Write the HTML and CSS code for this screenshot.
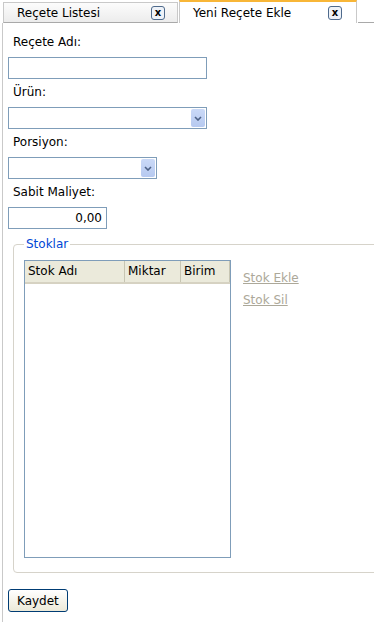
FILE: index.html
```html
<!DOCTYPE html>
<html lang="tr">
<head>
    <meta charset="UTF-8">
    <meta name="viewport" content="width=device-width, initial-scale=1.0">
    <title>Reçete</title>
    <link rel="stylesheet" href="styles.css">
</head>
<body>
    <div class="tabs">
        <div class="tab">
            <span class="tab-title">Reçete Listesi</span>
            <span class="tab-close">x</span>
        </div>
        <div class="tab active">
            <span class="tab-title">Yeni Reçete Ekle</span>
            <span class="tab-close">x</span>
        </div>
        <div class="tab-fill"></div>
    </div>

    <div class="panel">
        <form class="recipe-form">
            <label for="receteAdi">Reçete Adı:</label>
            <input type="text" id="receteAdi" class="field wide">

            <label for="urun">Ürün:</label>
            <div class="select-wrap wide">
                <select id="urun" class="field"></select>
                <span class="select-btn">
                    <svg width="8" height="5" viewBox="0 0 8 5"><path d="M1 1 L4 4 L7 1" fill="none" stroke="#4d6185" stroke-width="1.6"/></svg>
                </span>
            </div>

            <label for="porsiyon">Porsiyon:</label>
            <div class="select-wrap mid">
                <select id="porsiyon" class="field"></select>
                <span class="select-btn">
                    <svg width="8" height="5" viewBox="0 0 8 5"><path d="M1 1 L4 4 L7 1" fill="none" stroke="#4d6185" stroke-width="1.6"/></svg>
                </span>
            </div>

            <label for="maliyet">Sabit Maliyet:</label>
            <input type="text" id="maliyet" class="field short num" value="0,00">

            <fieldset class="stocks">
                <legend>Stoklar</legend>
                <div class="stock-body">
                    <div class="grid">
                        <div class="grid-head">
                            <div class="col col-name">Stok Adı</div>
                            <div class="col col-qty">Miktar</div>
                            <div class="col col-unit">Birim</div>
                        </div>
                    </div>
                    <div class="stock-links">
                        <a href="#">Stok Ekle</a>
                        <a href="#">Stok Sil</a>
                    </div>
                </div>
            </fieldset>

            <button type="button" class="save">Kaydet</button>
        </form>
    </div>
</body>
</html>
```

FILE: styles.css
```css
body {
    margin: 0;
    font-family: 'DejaVu Sans', sans-serif;
    font-size: 12px;
    color: #000;
    background: #fff;
}

.tabs {
    display: flex;
    height: 23px;
    padding-left: 3px;
}

.tab {
    width: 175px;
    height: 21px;
    margin-top: 2px;
    display: flex;
    align-items: center;
    justify-content: space-between;
    padding: 0 12px 0 13px;
    box-sizing: border-box;
    border: 1px solid #c9c9c9;
    border-bottom: 1px solid #a9a9a9;
    background: linear-gradient(#fcfcfc, #ececec);
    margin-right: 1px;
}

.tab.active {
    width: 178px;
    height: 23px;
    margin-top: 0;
    padding-right: 14px;
    border-top: 2px solid #f8b637;
    border-bottom: none;
    background: #fff;
}

.tab-fill {
    flex: 1;
    border-bottom: 1px solid #a9a9a9;
}

.tab-close {
    width: 12px;
    height: 12px;
    border: 1px solid #4e6a8c;
    border-radius: 3px;
    font-size: 10px;
    font-weight: bold;
    line-height: 11px;
    text-align: center;
    background: #eef2f8;
}

.panel {
    margin-left: 2px;
    border-left: 1px solid #c9c9c9;
    min-height: 599px;
}

.recipe-form {
    display: flex;
    flex-direction: column;
    align-items: flex-start;
    padding: 12px 0 0 5px;
}

label {
    padding-left: 5px;
    height: 15px;
    line-height: 15px;
    margin-bottom: 7px;
}

.field {
    height: 22px;
    box-sizing: border-box;
    border: 1px solid #7f9db9;
    font-family: inherit;
    font-size: 12px;
    padding: 2px 4px;
    margin: 0 0 6px 0;
    background: #fff;
}

.wide { width: 199px; }
.mid { width: 149px; }
.short { width: 99px; }
.num { text-align: right; }

.select-wrap {
    position: relative;
    height: 22px;
    margin-bottom: 6px;
}

.select-wrap select {
    appearance: none;
    width: 100%;
    margin: 0;
}

.select-btn {
    position: absolute;
    right: 2px;
    top: 2px;
    width: 14px;
    height: 18px;
    border-radius: 2px;
    background: linear-gradient(#cad9f7, #b6c9f0);
    display: flex;
    align-items: center;
    justify-content: center;
    pointer-events: none;
}

.stocks {
    align-self: stretch;
    margin: 2px -10px 0 5px;
    padding: 9px 10px 14px 10px;
    border: 1px solid #d6d3ca;
    border-radius: 4px;
}

.stocks legend {
    color: #0046d5;
    padding: 0 2px;
    margin-left: 0;
}

.stock-body {
    display: flex;
    gap: 12px;
}

.grid {
    width: 207px;
    height: 298px;
    box-sizing: border-box;
    border: 1px solid #7f9db9;
    background: #fff;
}

.grid-head {
    display: flex;
    height: 21px;
    background: #ebeadb;
    border-bottom: 2px solid #d6d2c2;
}

.col {
    box-sizing: border-box;
    padding: 3px 3px 0 3px;
    line-height: 15px;
    border-right: 1px solid #c7c5b2;
}

.col-name { width: 100px; }
.col-qty { width: 56px; }
.col-unit { width: 49px; }

.stock-links {
    display: flex;
    flex-direction: column;
    gap: 7px;
    padding-top: 11px;
}

.stock-links a {
    color: #aca899;
    line-height: 15px;
}

.save {
    margin-top: 16px;
    height: 23px;
    padding: 0 8px;
    font-family: inherit;
    font-size: 12px;
    border: 1px solid #003c74;
    border-radius: 3px;
    background: linear-gradient(#fff, #ece9d8);
}
```
